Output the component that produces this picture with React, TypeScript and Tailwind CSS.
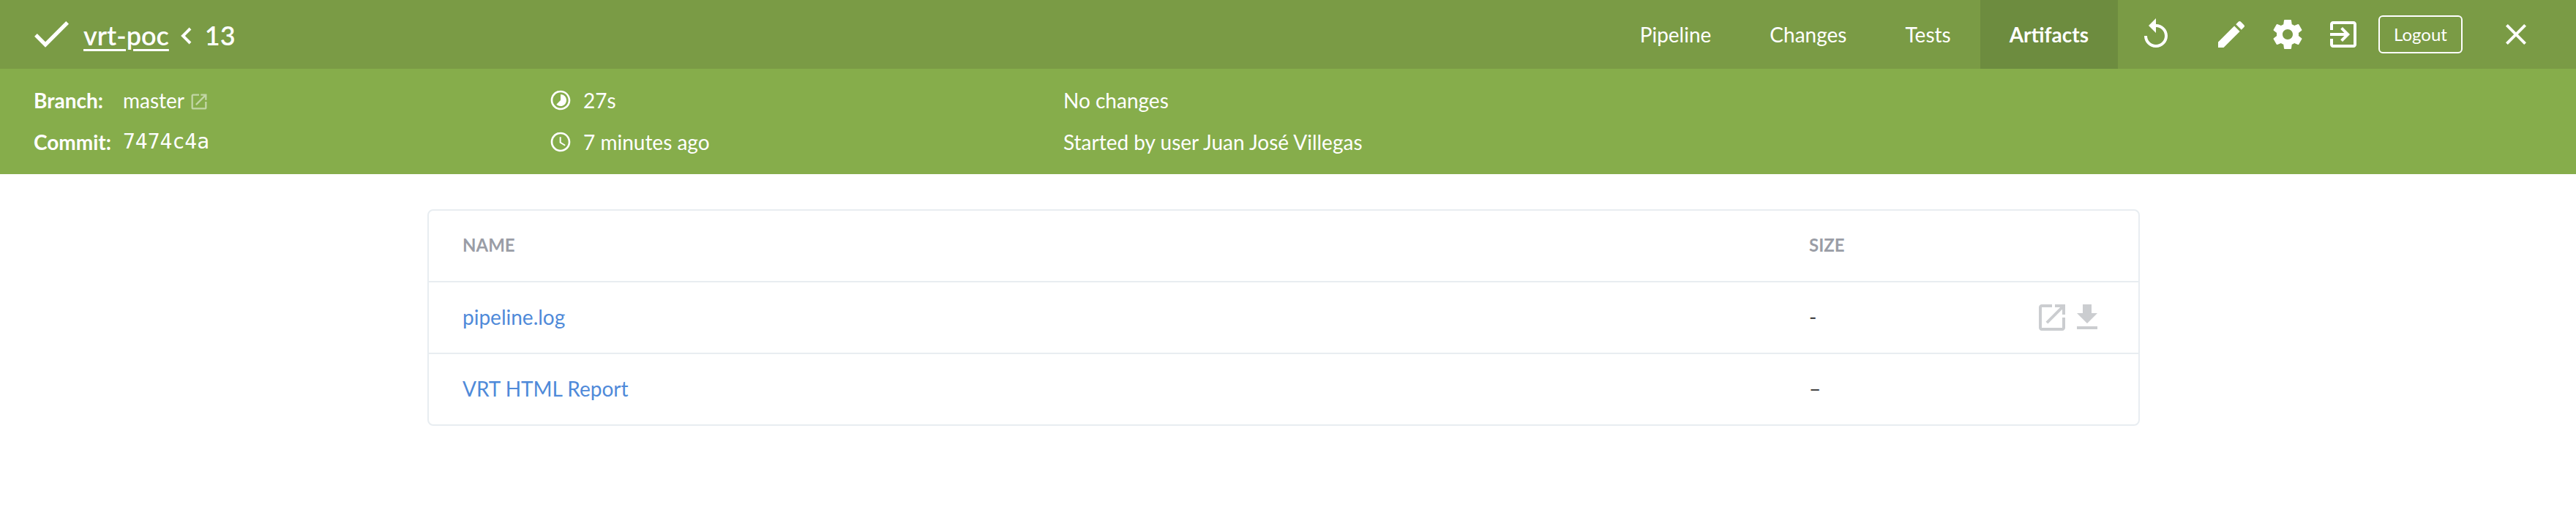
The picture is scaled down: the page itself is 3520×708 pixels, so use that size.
const icons = {
  check: "M9 16.2L4.8 12l-1.4 1.4L9 19 21 7l-1.4-1.4L9 16.2z",
  replay: "M12 5V1L7 6l5 5V7c3.31 0 6 2.69 6 6s-2.69 6-6 6-6-2.69-6-6H4c0 4.42 3.58 8 8 8s8-3.58 8-8-3.58-8-8-8z",
  edit: "M3 17.25V21h3.75L17.81 9.94l-3.75-3.75L3 17.25zM20.71 7.04c.39-.39.39-1.02 0-1.41l-2.34-2.34c-.39-.39-1.02-.39-1.41 0l-1.83 1.83 3.75 3.75 1.83-1.83z",
  gear: "M19.43 12.98c.04-.32.07-.64.07-.98s-.03-.66-.07-.98l2.11-1.65c.19-.15.24-.42.12-.64l-2-3.46c-.12-.22-.39-.3-.61-.22l-2.49 1c-.52-.4-1.08-.73-1.69-.98l-.38-2.65C14.46 2.18 14.25 2 14 2h-4c-.25 0-.46.18-.49.42l-.38 2.65c-.61.25-1.17.59-1.69.98l-2.49-1c-.23-.09-.49 0-.61.22l-2 3.46c-.13.22-.07.49.12.64l2.11 1.65c-.04.32-.07.65-.07.98s.03.66.07.98l-2.11 1.65c-.19.15-.24.42-.12.64l2 3.46c.12.22.39.3.61.22l2.49-1c.52.4 1.08.73 1.69.98l.38 2.65c.03.24.24.42.49.42h4c.25 0 .46-.18.49-.42l.38-2.65c.61-.25 1.17-.59 1.69-.98l2.49 1c.23.09.49 0 .61-.22l2-3.46c.12-.22.07-.49-.12-.64l-2.11-1.65zM12 15.5c-1.93 0-3.5-1.57-3.5-3.5s1.57-3.5 3.5-3.5 3.5 1.57 3.5 3.5-1.57 3.5-3.5 3.5z",
  exit: "M10.09 15.59L11.5 17l5-5-5-5-1.41 1.41L12.67 11H3v2h9.67l-2.58 2.59zM19 3H5c-1.11 0-2 .9-2 2v4h2V5h14v14H5v-4H3v4c0 1.1.89 2 2 2h14c1.1 0 2-.9 2-2V5c0-1.1-.9-2-2-2z",
  close: "M19 6.41L17.59 5 12 10.59 6.41 5 5 6.41 10.59 12 5 17.59 6.41 19 12 13.41 17.59 19 19 17.59 13.41 12z",
  open: "M19 19H5V5h7V3H5c-1.11 0-2 .9-2 2v14c0 1.1.89 2 2 2h14c1.1 0 2-.9 2-2v-7h-2v7zM14 3v2h3.59l-9.83 9.83 1.41 1.41L19 6.41V10h2V3h-7z",
  download: "M19 9h-4V3H9v6H5l7 7 7-7zM5 18v2h14v-2H5z",
  clock: "M11.99 2C6.47 2 2 6.48 2 12s4.47 10 9.99 10C17.52 22 22 17.52 22 12S17.52 2 11.99 2zM12 20c-4.42 0-8-3.58-8-8s3.58-8 8-8 8 3.58 8 8-3.58 8-8 8zM12.5 7H11v6l5.25 3.15.75-1.23-4.5-2.67z",
  timelapse: "M16.24 7.76C15.07 6.59 13.54 6 12 6v6l-4.24 4.24c2.34 2.34 6.14 2.34 8.49 0 2.34-2.34 2.34-6.14-.01-8.48zM12 2C6.48 2 2 6.48 2 12s4.48 10 10 10 10-4.48 10-10S17.52 2 12 2zm0 18c-4.42 0-8-3.58-8-8s3.58-8 8-8 8 3.58 8 8-3.58 8-8 8z",
};

function Icon({ d, size, className }: { d: string; size: number; className?: string }) {
  return (
    <svg width={size} height={size} viewBox="0 0 24 24" fill="currentColor" className={className}>
      <path d={d} />
    </svg>
  );
}

const tabs = ["Pipeline", "Changes", "Tests", "Artifacts"];

function TopBar() {
  return (
    <div className="h-[94px] bg-[#7a9b45] text-white flex items-center">
      <Icon d={icons.check} size={64} className="ml-[38px] mb-[3px] shrink-0" />
      <a className="ml-[12px] mt-[2px] text-[36px] font-semibold underline underline-offset-[5px] decoration-[3px]">vrt-poc</a>
      <svg width="16" height="28" viewBox="0 0 16 28" className="ml-[16px] mt-[4px]" fill="none" stroke="currentColor" strokeWidth="4">
        <path d="M13 4L3 14l10 10" />
      </svg>
      <span className="ml-[17px] mt-[2px] text-[36px] font-semibold">13</span>
      <div className="ml-auto flex items-center h-full">
        {tabs.map((t) => (
          <div
            key={t}
            className={
              t === "Artifacts"
                ? "h-full px-[40px] flex items-center text-[28px] font-bold bg-[#6d8c3f]"
                : "h-full px-[40px] flex items-center text-[28px]"
            }
          >
            {t}
          </div>
        ))}
        <Icon d={icons.replay} size={48} className="ml-[28px]" />
        <Icon d={icons.edit} size={48} className="ml-[55px]" />
        <Icon d={icons.gear} size={48} className="ml-[29px]" />
        <Icon d={icons.exit} size={48} className="ml-[28px]" />
        <button className="ml-[24px] w-[115px] h-[52px] border-2 border-white rounded-[6px] text-[24px]">Logout</button>
        <Icon d={icons.close} size={48} className="ml-[49px] mr-[58px]" />
      </div>
    </div>
  );
}

function InfoBar() {
  return (
    <div className="h-[144px] bg-[#86ad4b] text-white text-[28px] flex pt-[25px]">
      <div className="w-[752px] pl-[46px] flex flex-col gap-[21px]">
        <div className="flex items-center h-[36px]">
          <span className="w-[122px] font-bold">Branch:</span>
          <span>master</span>
          <Icon d={icons.open} size={28} className="ml-[6px] mt-[4px] opacity-50" />
        </div>
        <div className="flex items-center h-[36px]">
          <span className="w-[122px] font-bold">Commit:</span>
          <span className="font-['DejaVu_Sans_Mono',monospace] text-[28px]">7474c4a</span>
        </div>
      </div>
      <div className="w-[701px] flex flex-col gap-[21px]">
        <div className="flex items-center h-[36px]">
          <Icon d={icons.timelapse} size={32} className="-ml-[2px]" />
          <span className="ml-[15px]">27s</span>
        </div>
        <div className="flex items-center h-[36px]">
          <Icon d={icons.clock} size={32} className="-ml-[2px]" />
          <span className="ml-[15px]">7 minutes ago</span>
        </div>
      </div>
      <div className="flex flex-col gap-[21px]">
        <div className="h-[36px] flex items-center">No changes</div>
        <div className="h-[36px] flex items-center">Started by user Juan José Villegas</div>
      </div>
    </div>
  );
}

const rows = [
  { name: "pipeline.log", size: "-", actions: true },
  { name: "VRT HTML Report", size: "–", actions: false },
];

function ArtifactsTable() {
  return (
    <div className="mt-[48px] ml-[584px] w-[2340px] border-2 border-[#e8edf1] rounded-[8px] text-[28px]">
      <div className="h-[96px] flex items-center pl-[46px] pb-[2px] text-[24px] font-bold text-[#9a9da6] uppercase">
        <span className="w-[1840px]">Name</span>
        <span>Size</span>
      </div>
      {rows.map((r) => (
        <div key={r.name} className="h-[98px] border-t-2 border-[#e8edf1] flex items-center pl-[46px] pb-[2px]">
          <a className="w-[1840px] text-[#4f8ad9]">{r.name}</a>
          <span className="text-[#444]">{r.size}</span>
          {r.actions && (
            <div className="ml-auto mr-[46px] mt-[2px] flex items-center text-[#cbcdd0]">
              <Icon d={icons.open} size={48} />
              <Icon d={icons.download} size={48} />
            </div>
          )}
        </div>
      ))}
    </div>
  );
}

export default function App() {
  return (
    <div className="w-[3520px] h-[708px] bg-white font-['Lato',sans-serif] overflow-hidden">
      <TopBar />
      <InfoBar />
      <ArtifactsTable />
    </div>
  );
}
